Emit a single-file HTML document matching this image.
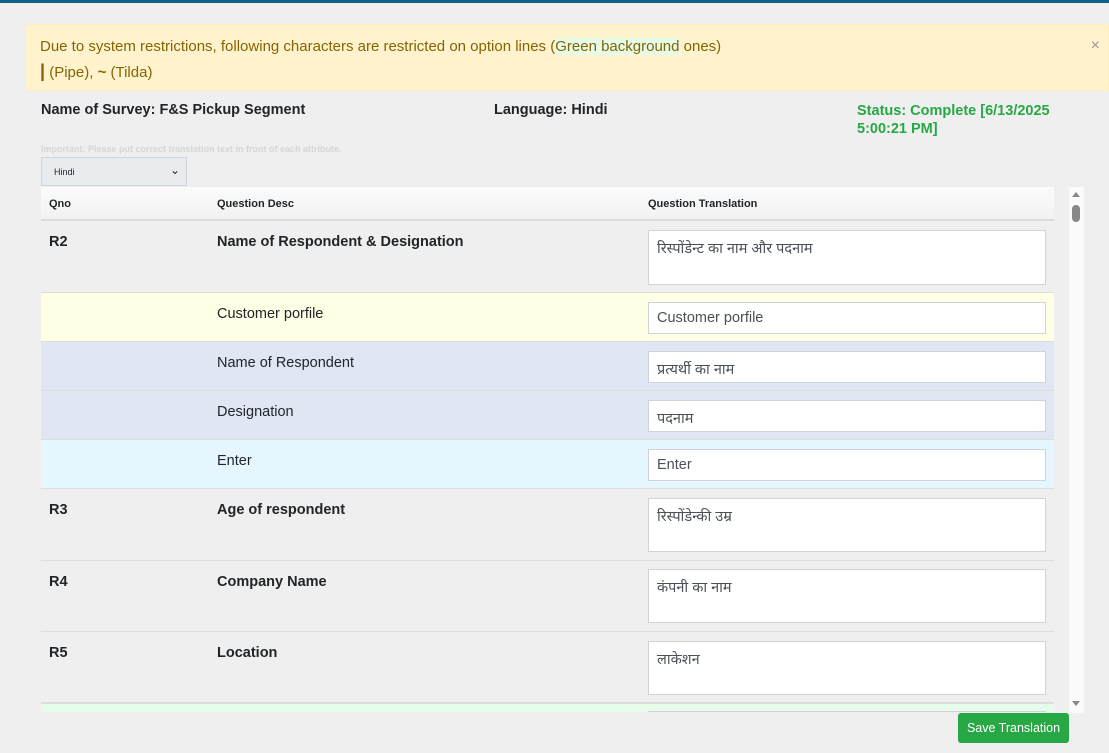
<!DOCTYPE html>
<html><head><meta charset="utf-8"><style>
*{box-sizing:border-box;margin:0;padding:0}
body{width:1109px;height:753px;overflow:hidden;background:#efefef;font-family:"Liberation Sans","Noto Sans CJK SC",sans-serif;color:#212529;position:relative}
.a{position:absolute}
.top{left:0;top:0;width:1109px;height:3px;background:#0e6286}
.alert{left:25px;top:24px;width:1084px;height:67px;background:#fff3cd;border:1px solid #ffeeba;color:#856404;font-size:15px;line-height:25px;padding:9px 14px}
.b{font-weight:bold;font-size:14.5px}
.row{left:41px;width:1013px;border-bottom:1px solid #ddd}
.t{position:absolute;font-size:14.5px}
.ta{position:absolute;left:607px;width:398px;background:#fff;border:1px solid #ced4da;font-size:14.5px;color:#495057;padding:7px 8px}
</style></head><body>
<div class="a top"></div>
<div class="a alert">Due to system restrictions, following characters are restricted on option lines (<span style="background:#e6fbe8">Green background</span> ones)<br><b style="font-size:18px">|</b> (Pipe), <b>~</b> (Tilda)<span style="position:absolute;right:8px;top:8px;font-size:16px;color:#999">×</span></div>
<div class="a b" style="left:41px;top:102px">Name of Survey: F&amp;S Pickup Segment</div>
<div class="a b" style="left:494px;top:102px">Language: Hindi</div>
<div class="a b" style="left:857px;top:102px;color:#28a745;line-height:18px">Status: Complete [6/13/2025<br>5:00:21 PM]</div>
<div class="a" style="left:41px;top:144px;font-size:9px;color:#d6d6d6;font-weight:bold">Important: Please put correct translation text in front of each attribute.</div>
<div class="a" style="left:41px;top:157px;width:146px;height:29px;background:#e9ecef;border:1px solid #ced4da;font-size:9px;padding:9px 12px">Hindi<span style="position:absolute;right:6px;top:5px;font-size:12px">⌄</span></div>
<div class="a row" style="top:187px;height:34px;background:linear-gradient(#fbfbfb,#f2f2f2);border-bottom:2px solid #dcdcdc">
<span class="t" style="left:8px;top:11px;font-size:11px;font-weight:bold">Qno</span><span class="t" style="left:176px;top:11px;font-size:11px;font-weight:bold">Question Desc</span><span class="t" style="left:607px;top:11px;font-size:11px;font-weight:bold">Question Translation</span></div>

<div class="a row" style="top:221px;height:72px"><span class="t b" style="left:8px;top:13px">R2</span><span class="t b" style="left:176px;top:13px">Name of Respondent &amp; Designation</span><div class="ta" style="top:9px;height:55px">रिस्पोंडेन्ट का नाम और पदनाम</div></div>
<div class="a row" style="top:293px;height:49px;background:#ffffe5"><span class="t" style="left:176px;top:13px">Customer porfile</span><div class="ta" style="top:9px;height:32px">Customer porfile</div></div>
<div class="a row" style="top:342px;height:49px;background:#e1e6f4"><span class="t" style="left:176px;top:13px">Name of Respondent</span><div class="ta" style="top:9px;height:32px">प्रत्यर्थी का नाम</div></div>
<div class="a row" style="top:391px;height:49px;background:#e1e6f4"><span class="t" style="left:176px;top:13px">Designation</span><div class="ta" style="top:9px;height:32px">पदनाम</div></div>
<div class="a row" style="top:440px;height:49px;background:#e6f6fe"><span class="t" style="left:176px;top:13px">Enter</span><div class="ta" style="top:9px;height:32px">Enter</div></div>
<div class="a row" style="top:489px;height:72px"><span class="t b" style="left:8px;top:13px">R3</span><span class="t b" style="left:176px;top:13px">Age of respondent</span><div class="ta" style="top:9px;height:54px">रिस्पोंडेन्की उम्र</div></div>
<div class="a row" style="top:561px;height:71px"><span class="t b" style="left:8px;top:13px">R4</span><span class="t b" style="left:176px;top:13px">Company Name</span><div class="ta" style="top:8px;height:54px">कंपनी का नाम</div></div>
<div class="a row" style="top:632px;height:71px"><span class="t b" style="left:8px;top:13px">R5</span><span class="t b" style="left:176px;top:13px">Location</span><div class="ta" style="top:9px;height:54px">लाकेशन</div></div>
<div class="a" style="left:41px;top:703px;width:1013px;height:9px;background:#e6fbe8;border-top:1px solid #ddd"></div>
<div class="a" style="left:648px;top:711px;width:398px;height:1px;background:#ced4da"></div>

<div class="a" style="left:1069px;top:187px;width:15px;height:526px;background:#fafafa"></div>
<div class="a" style="left:1072px;top:192px;width:0;height:0;border-left:4px solid transparent;border-right:4px solid transparent;border-bottom:5px solid #888"></div>
<div class="a" style="left:1072px;top:205px;width:8px;height:17px;border-radius:4px;background:#888"></div>
<div class="a" style="left:1072px;top:701px;width:0;height:0;border-left:4px solid transparent;border-right:4px solid transparent;border-top:5px solid #888"></div>

<div class="a" style="left:958px;top:713px;width:111px;height:30px;background:#28a745;border-radius:3px;color:#fff;font-size:12.5px;text-align:center;line-height:30px">Save Translation</div>
</body></html>
